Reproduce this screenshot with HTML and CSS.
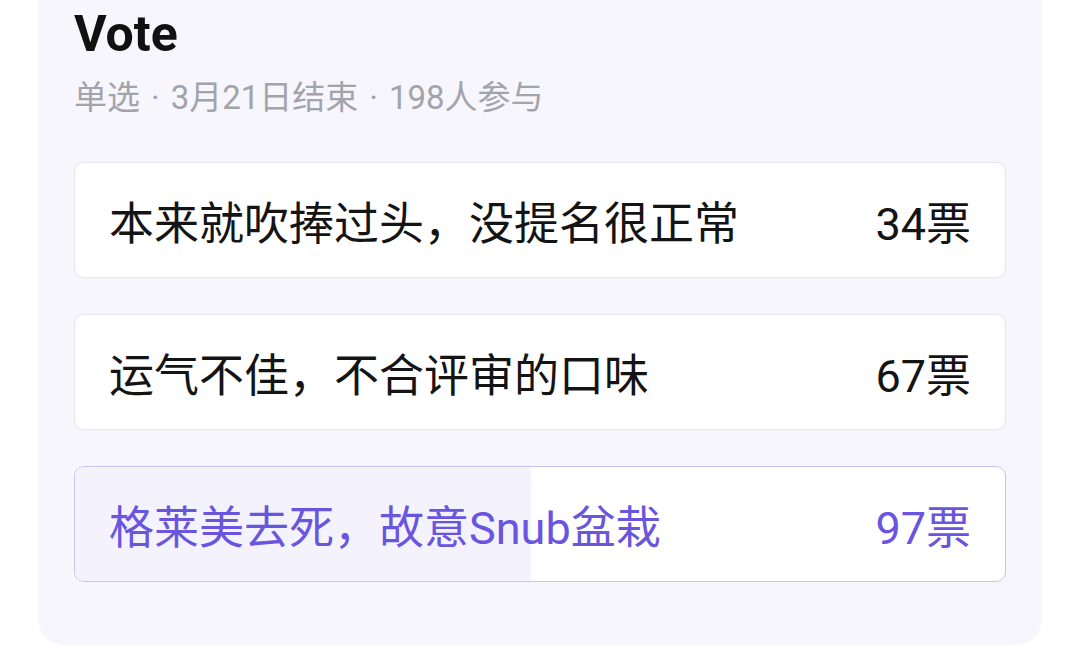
FILE: index.html
```html
<!DOCTYPE html>
<html lang="zh-CN">
<head>
    <meta charset="UTF-8">
    <title>Vote</title>
    <link rel="stylesheet" href="styles.css">
</head>
<body>
<div class="page">
    <section class="vote-card">
        <h1 class="vote-title">Vote</h1>
        <p class="vote-meta">单选<span class="sep">·</span>3月21日结束<span class="sep">·</span>198人参与</p>
        <ul class="options">
            <li class="option">
                <span class="option-text">本来就吹捧过头，没提名很正常</span>
                <span class="option-count">34票</span>
            </li>
            <li class="option">
                <span class="option-text">运气不佳，不合评审的口味</span>
                <span class="option-count">67票</span>
            </li>
            <li class="option selected">
                <div class="option-bar" style="width: 49%"></div>
                <span class="option-text">格莱美去死，故意Snub盆栽</span>
                <span class="option-count">97票</span>
            </li>
        </ul>
    </section>
</div>
</body>
</html>
```

FILE: styles.css
```css
/* General Styles */
body {
    margin: 0;
    padding: 0;
    background-color: #ffffff;
    font-family: Roboto, "Noto Sans CJK SC", sans-serif;
}

.page {
    padding: 0 38px;
}

/* Card */
.vote-card {
    background-color: #f6f6fc;
    border-radius: 0 0 26px 26px;
    padding: 6px 36px 63px 36px;
}

.vote-title {
    margin: 0;
    font-size: 50px;
    line-height: 56px;
    font-weight: 700;
    color: #111111;
}

.vote-meta {
    margin: 16px 0 0 0;
    font-size: 33px;
    line-height: 40px;
    color: #a3a3aa;
}

.vote-meta .sep {
    padding: 0 11px;
}

/* Options */
.options {
    list-style: none;
    margin: 44px 0 0 0;
    padding: 0;
    display: flex;
    flex-direction: column;
    gap: 36px;
}

.option {
    position: relative;
    display: flex;
    justify-content: space-between;
    align-items: center;
    height: 114px;
    padding: 0 34px 0 34px;
    background-color: #ffffff;
    border: 1px solid #e6e6eb;
    border-radius: 10px;
    overflow: hidden;
    font-size: 45px;
    color: #141414;
}

.option-text,
.option-count {
    position: relative;
}

.option.selected {
    border-color: #cbc3ec;
    color: #6a55de;
}

.option-bar {
    position: absolute;
    left: 0;
    top: 0;
    bottom: 0;
    background-color: #f4f3fd;
}
```
